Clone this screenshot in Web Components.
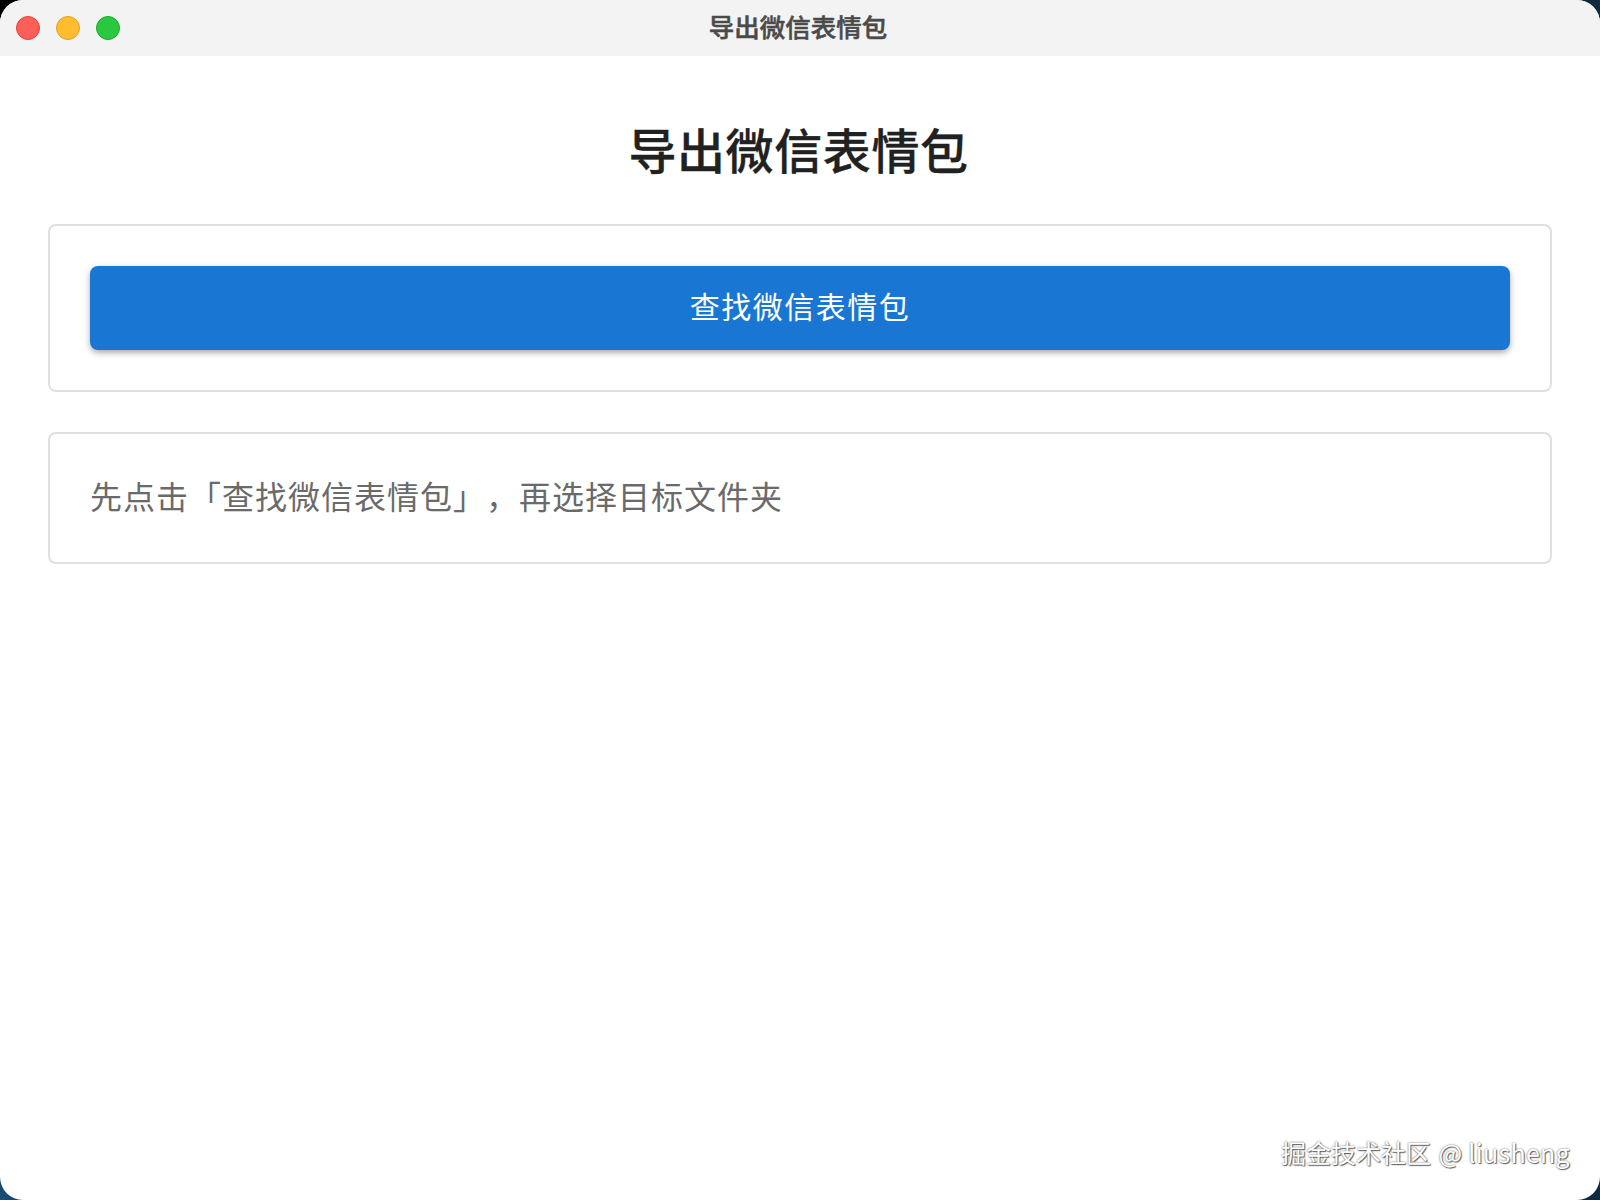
<!DOCTYPE html>
<html lang="zh-CN"><head><meta charset="utf-8"><style>
html,body{margin:0;padding:0;background:#000;}
body{width:1600px;height:1200px;overflow:hidden;background:
 radial-gradient(circle at 0 0,#000 0,#000 30px,transparent 31px),
 radial-gradient(circle at 0 100%,#1c5078 0,#123a5a 30px,transparent 31px),
 #0e2a40;font-family:"Noto Sans CJK SC","Liberation Sans",sans-serif;}
water-mark span{letter-spacing:.3px;margin-left:2px;}
</style></head><body>
<app-window>
<title-bar slot="bar">导出微信表情包</title-bar>
<h-title>导出微信表情包</h-title>
<app-card size="button"><primary-button>查找微信表情包</primary-button></app-card>
<app-card><hint-text>先点击「查找微信表情包」，再选择目标文件夹</hint-text></app-card>
<water-mark>掘金技术社区 <span>@ liusheng</span></water-mark>
</app-window>
<script>
function def(name,css,html){
  customElements.define(name,class extends HTMLElement{
    constructor(){super();const s=this.attachShadow({mode:'open'});s.innerHTML='<style>'+css+'</style>'+html;}
  });
}
const FF='"Noto Sans CJK SC","Liberation Sans",sans-serif';
def('app-window',`:host{display:flex;flex-direction:column;position:relative;width:1600px;height:1200px;background:#fff;border-radius:23px;overflow:hidden;font-family:${FF};text-spacing-trim:space-all;}
.main{display:flex;flex-direction:column;flex:1;padding:0 48px;}`,`<slot name="bar"></slot><div class="main"><slot></slot></div>`);
def('title-bar',`:host{display:flex;align-items:center;justify-content:center;position:relative;box-sizing:border-box;height:56px;padding:0 4px 6px 0;flex:none;background:#f3f3f3;color:#4a4a4a;font-size:25.5px;font-weight:500;-webkit-text-stroke:.5px #4a4a4a;}
.dots{position:absolute;left:16px;top:16px;display:flex;gap:16px;-webkit-text-stroke:0;}
.d{width:24px;height:24px;border-radius:50%;box-sizing:border-box;border:1px solid}
.r{background:#ff5f57;border-color:#e0443e}.y{background:#febc2e;border-color:#dea123}.g{background:#28c840;border-color:#1aab29}`,
`<div class="dots"><div class="d r"></div><div class="d y"></div><div class="d g"></div></div><slot></slot>`);
def('h-title',`:host{display:block;text-align:center;color:#212121;font-size:48px;font-weight:500;-webkit-text-stroke:.3px #212121;letter-spacing:.6px;line-height:64px;padding-right:3px;margin-top:60px;margin-bottom:44px;}`,`<slot></slot>`);
def('app-card',`:host{display:block;box-sizing:border-box;border:2px solid #e0e0e0;border-radius:8px;padding:40px;margin-bottom:40px;background:#fff;}`,`<slot></slot>`);
def('primary-button',`:host{display:flex;align-items:center;justify-content:center;box-sizing:border-box;height:84px;padding-bottom:6px;background:#1976d2;color:#fff;border-radius:8px;font-size:30px;letter-spacing:1.5px;box-shadow:0 3px 6px -1px rgba(0,0,0,.3),0 2px 8px rgba(0,0,0,.12);}`,`<slot></slot>`);
def('hint-text',`:host{display:block;color:#6a6a6a;font-size:32px;line-height:42px;padding-bottom:6px;letter-spacing:1px;}`,`<slot></slot>`);
def('water-mark',`:host{position:absolute;right:30px;bottom:32px;color:#fff;font-size:25px;line-height:32px;text-shadow:0 0 2px #555,1px 1px 1px #666;}`,`<slot></slot>`);
</script></body></html>
